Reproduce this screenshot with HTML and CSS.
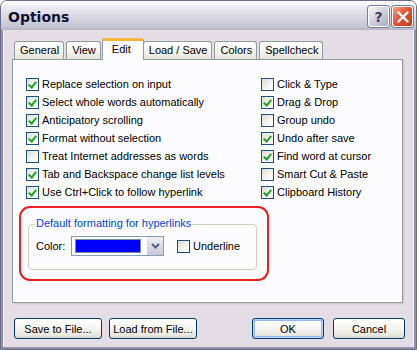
FILE: index.html
```html
<!DOCTYPE html>
<html>
<head>
    <title>Options</title>
    <link rel="stylesheet" href="styles.css">
</head>
<body>
    <div class="window">
        <div class="titlebar">
            <span class="title">Options</span>
            <div class="title-buttons">
                <div class="tb-btn help">?</div>
                <div class="tb-btn close">
                    <svg width="12" height="12" viewBox="0 0 12 12"><path d="M1.5 1.5 L10.5 10.5 M10.5 1.5 L1.5 10.5" stroke="#fff" stroke-width="2.4" stroke-linecap="round"/></svg>
                </div>
            </div>
        </div>

        <div class="frame">
            <div class="tabs">
                <div class="tab">General</div>
                <div class="tab">View</div>
                <div class="tab active">Edit</div>
                <div class="tab">Load / Save</div>
                <div class="tab">Colors</div>
                <div class="tab">Spellcheck</div>
            </div>

            <div class="panel">
                <div class="columns">
                    <div class="col col-left">
                        <label class="check"><span class="box on"></span>Replace selection on input</label>
                        <label class="check"><span class="box on"></span>Select whole words automatically</label>
                        <label class="check"><span class="box on"></span>Anticipatory scrolling</label>
                        <label class="check"><span class="box on"></span>Format without selection</label>
                        <label class="check"><span class="box"></span>Treat Internet addresses as words</label>
                        <label class="check"><span class="box on"></span>Tab and Backspace change list levels</label>
                        <label class="check"><span class="box on"></span>Use Ctrl+Click to follow hyperlink</label>
                    </div>
                    <div class="col col-right">
                        <label class="check"><span class="box"></span>Click &amp; Type</label>
                        <label class="check"><span class="box on"></span>Drag &amp; Drop</label>
                        <label class="check"><span class="box"></span>Group undo</label>
                        <label class="check"><span class="box on"></span>Undo after save</label>
                        <label class="check"><span class="box on"></span>Find word at cursor</label>
                        <label class="check"><span class="box"></span>Smart Cut &amp; Paste</label>
                        <label class="check"><span class="box on"></span>Clipboard History</label>
                    </div>
                </div>

                <div class="highlight">
                    <div class="group">
                        <span class="legend">Default formatting for hyperlinks</span>
                        <div class="group-row">
                            <span class="field-label">Color:</span>
                            <div class="combo">
                                <div class="swatch"></div>
                                <div class="combo-arrow">
                                    <svg width="9" height="6" viewBox="0 0 9 6"><path d="M1 1 L4.5 4.5 L8 1" fill="none" stroke="#4d6185" stroke-width="2"/></svg>
                                </div>
                            </div>
                            <label class="check underline"><span class="box"></span>Underline</label>
                        </div>
                    </div>
                </div>
            </div>

            <div class="footer">
                <div class="footer-left">
                    <button class="btn wide">Save to File...</button>
                    <button class="btn wide">Load from File...</button>
                </div>
                <div class="footer-right">
                    <button class="btn default">OK</button>
                    <button class="btn">Cancel</button>
                </div>
            </div>
        </div>
    </div>
</body>
</html>
```

FILE: styles.css
```css
html, body {
    margin: 0;
    padding: 0;
    background: #fff;
}

body {
    font-family: 'Liberation Sans', Arial, sans-serif;
    font-size: 11px;
    color: #000;
}

.window {
    width: 417px;
    height: 350px;
    box-sizing: border-box;
    border: 1px solid #6c6c8c;
    border-radius: 7px 7px 0 0;
    background: #e5dde6;
    display: flex;
    flex-direction: column;
    overflow: hidden;
}

.titlebar {
    height: 29px;
    flex: none;
    display: flex;
    align-items: center;
    justify-content: space-between;
    padding: 0 3px 0 7px;
    background: linear-gradient(#fdfdfe 0%, #e9e8f0 25%, #d6d5e0 60%, #c4c3d2 90%, #b5b4c6 100%);
}

.title {
    font-family: 'DejaVu Sans', Tahoma, sans-serif;
    font-weight: bold;
    font-size: 14px;
    color: #101030;
    padding-top: 2px;
}

.title-buttons {
    display: flex;
    gap: 3px;
    padding-top: 2px;
}

.tb-btn {
    width: 19px;
    height: 19px;
    border: 1px solid #fff;
    border-radius: 3px;
    display: flex;
    align-items: center;
    justify-content: center;
    box-shadow: 0 0 0 1px #7d7d99;
}

.tb-btn.help {
    background: linear-gradient(135deg, #f4f4f8 0%, #c9c9d8 60%, #a9a9c0 100%);
    color: #3f3f5f;
    font-family: 'DejaVu Sans', sans-serif;
    font-weight: bold;
    font-size: 14px;
}

.tb-btn.close {
    background: linear-gradient(135deg, #f5a58a 0%, #e0553a 45%, #c13b1f 100%);
}

.frame {
    flex: 1;
    border-left: 2px solid #8f8fa8;
    border-right: 2px solid #8f8fa8;
    border-bottom: 2px solid #8f8fa8;
    box-shadow: inset 1px 0 0 #f4f0f4, inset -1px 0 0 #f4f0f4;
    padding: 7px 11px 0 9px;
    display: flex;
    flex-direction: column;
}

.tabs {
    display: flex;
    align-items: flex-end;
    padding-left: 2px;
    height: 22px;
    position: relative;
    z-index: 1;
}

.tab {
    height: 17px;
    line-height: 17px;
    padding: 0 4px 0 5px;
    margin-right: 2px;
    border: 1px solid #919b9c;
    border-bottom: none;
    border-radius: 3px 3px 0 0;
    background: linear-gradient(#ffffff 0%, #f3f3ef 60%, #e3e2da 100%);
    box-sizing: content-box;
}

.tab.active {
    line-height: 17px;
    margin: 0 0 -1px -1px;
    padding: 0 12px 0 9px;
    background: #fcfcfe;
    border-top: 3px solid #f5b53a;
    height: 19px;
}

.tab.active + .tab {
    margin-left: -1px;
}

.panel {
    background: #fcfcfe;
    border: 1px solid #919b9c;
    height: 244px;
    box-sizing: border-box;
    box-shadow: 1px 1px 0 #d0cad2, 2px 2px 0 #ddd6de;
    padding: 15px 0 0 13px;
}

.columns {
    display: flex;
}

.col-left {
    width: 235px;
}

.col {
    display: flex;
    flex-direction: column;
}

.check {
    display: flex;
    align-items: center;
    height: 18px;
    white-space: nowrap;
}

.box {
    width: 11px;
    height: 11px;
    border: 1px solid #1c5180;
    background: linear-gradient(135deg, #dcdcd4 0%, #f2f2ee 50%, #ffffff 100%);
    margin-right: 3px;
    flex: none;
    position: relative;
}

.box.on::after {
    content: '';
    position: absolute;
    left: 3px;
    top: 1px;
    width: 3px;
    height: 6px;
    border: solid #21a121;
    border-width: 0 2px 2px 0;
    transform: rotate(40deg);
}

.highlight {
    margin: 5px 0 0 -7px;
    width: 250px;
    height: 75px;
    box-sizing: border-box;
    border: 2px solid #ee1c24;
    border-radius: 11px;
    padding: 16px 10px 0 7px;
}

.group {
    border: 1px solid #d0d0bf;
    border-radius: 4px;
    height: 46px;
    position: relative;
    padding: 11px 0 0 7px;
    box-sizing: border-box;
}

.legend {
    position: absolute;
    left: 6px;
    top: -8px;
    background: #fcfcfe;
    color: #0046d5;
    padding: 0 1px;
    font-size: 11px;
}

.group-row {
    display: flex;
    align-items: center;
}

.field-label {
    width: 35px;
}

.combo {
    width: 93px;
    height: 20px;
    border: 1px solid #7f9db9;
    background: #fff;
    display: flex;
    align-items: center;
    padding-left: 3px;
    box-sizing: border-box;
    margin-right: 13px;
}

.swatch {
    width: 66px;
    height: 12px;
    background: #0000ff;
    border: 1px solid #7b8aa2;
    margin-right: 5px;
}

.combo-arrow {
    width: 16px;
    height: 18px;
    background: linear-gradient(#eeeef4, #c8c8d8);
    border-left: 1px solid #fff;
    display: flex;
    align-items: center;
    justify-content: center;
}

.footer {
    display: flex;
    justify-content: space-between;
    padding: 15px 0 0 2px;
    margin-right: -2px;
}

.footer-left, .footer-right {
    display: flex;
    gap: 7px;
}

.footer-right {
    gap: 9px;
}

.btn {
    font-family: 'Liberation Sans', Arial, sans-serif;
    font-size: 11px;
    height: 21px;
    width: 72px;
    padding: 0;
    border: 1px solid #003c74;
    border-radius: 3px;
    background: linear-gradient(#ffffff 0%, #f4f4f0 50%, #e6e5dd 90%, #d6d0c5 100%);
    color: #000;
}

.btn.wide {
    width: 88px;
}

.btn.default {
    box-shadow: inset 0 0 0 1px #bad2f7, inset 0 0 0 2px #98b8ea;
}
```
